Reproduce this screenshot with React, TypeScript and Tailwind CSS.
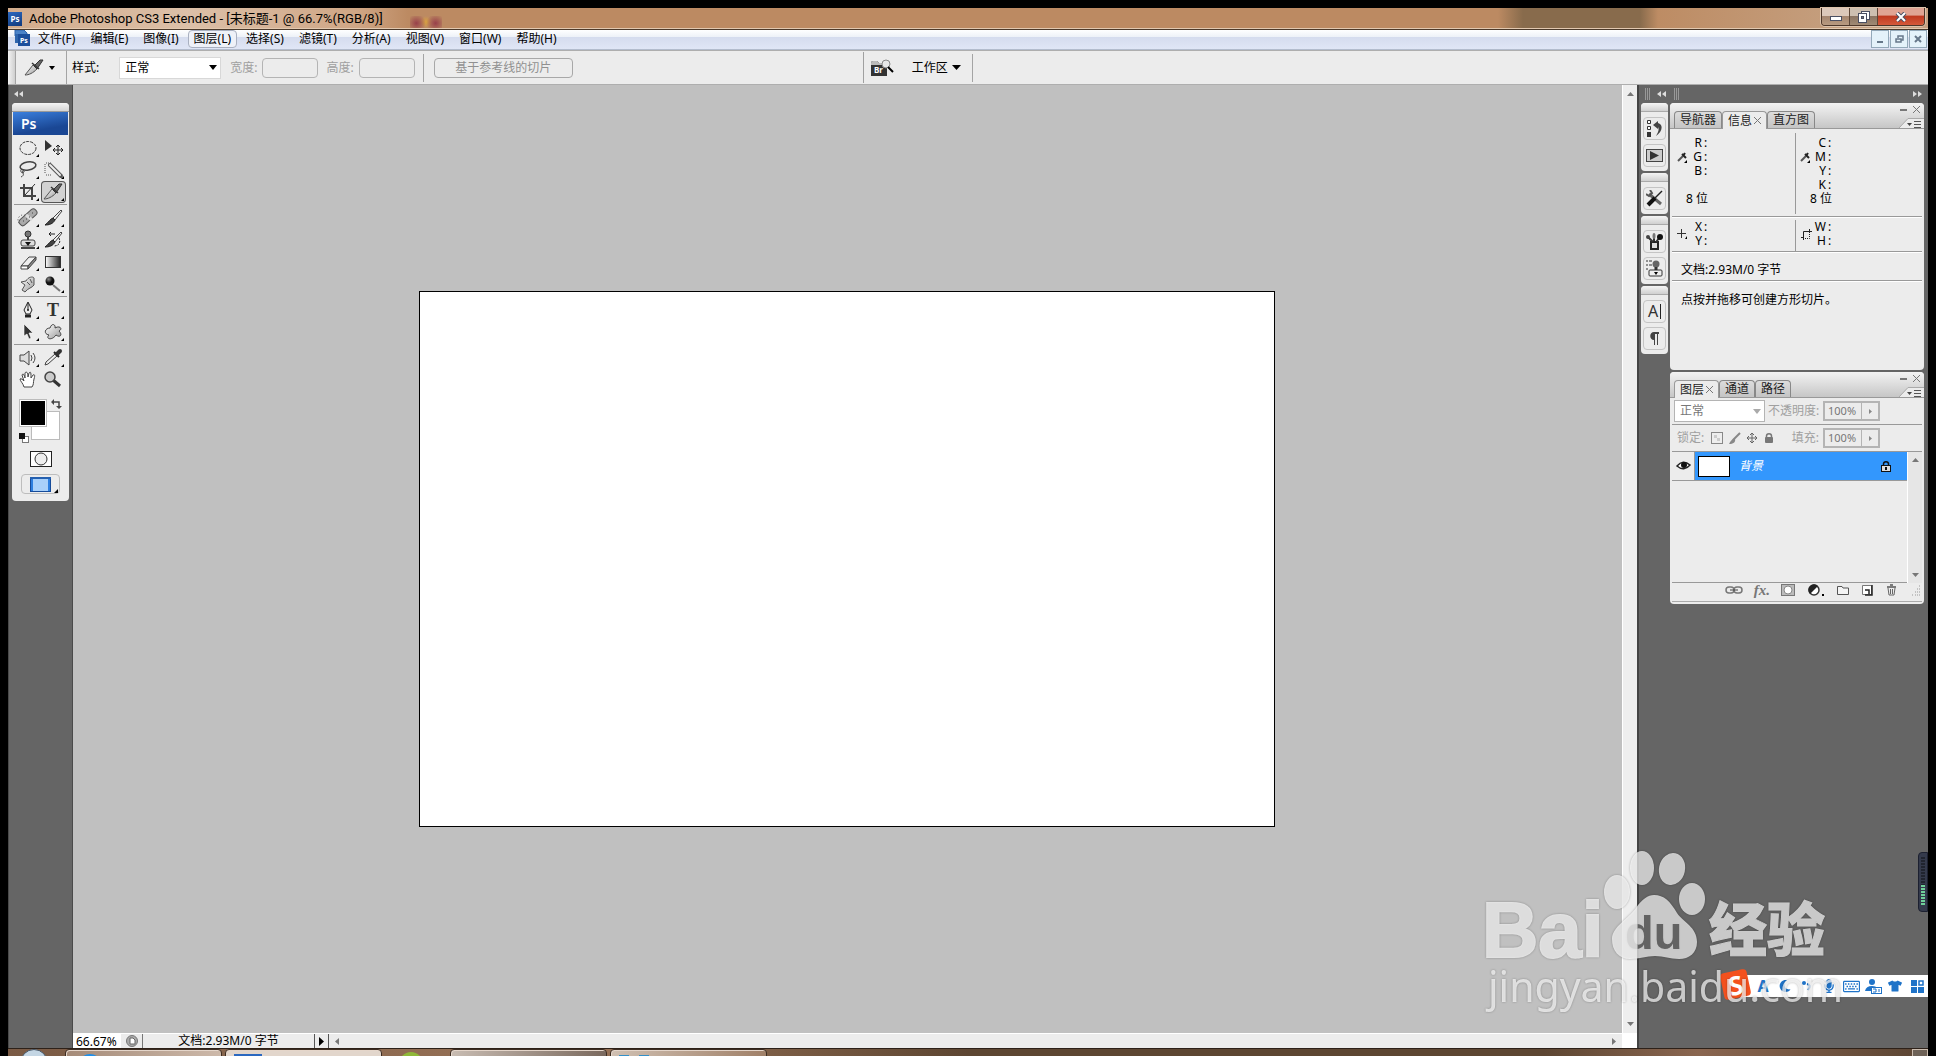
import type { ReactNode } from "react";
import { FaMicrophone, FaMoon, FaTshirt, FaRegKeyboard } from "react-icons/fa";

const menus = ["文件(F)", "编辑(E)", "图像(I)", "图层(L)", "选择(S)", "滤镜(T)", "分析(A)", "视图(V)", "窗口(W)", "帮助(H)"];

/* ---------- toolbox drawings, all on a 25x22 cell ---------- */

const slice = (
  <>
    <path d="M3 18 L11 8 L15 12 C11 16 7 18 3 18Z" fill="url(#metal)" stroke="#555" />
    <path d="M12 9 L18 3 H21 L15 12Z" fill="#666" stroke="#333" />
    <path d="M10 6 L17 12" stroke="#333" strokeWidth="1.5" />
  </>
);

const brush = (
  <>
    <path d="M20 3 L12 11 L14 13 L21 4Z" fill="#eee" stroke="#444" />
    <path d="M12 11 L14 13 C12 17 8 18 4 18 C8 15 9 12 12 11Z" fill="#444" stroke="#222" />
  </>
);

const stamp = (
  <>
    <circle cx="12" cy="5" r="3" fill="#777" stroke="#333" />
    <path d="M12 8 V12" stroke="#444" strokeWidth="2" />
    <rect x="5" y="11" width="14" height="6" rx="2" fill="#ddd" stroke="#444" />
    <path d="M5 19 H19" stroke="#444" strokeWidth="2" />
    <path d="M9 13 H15 L12 17Z" fill="#111" />
  </>
);

const toolGroups: { name: string; art: ReactNode; flat?: boolean }[][] = [
  [
    { name: "椭圆选框", art: <ellipse cx="12" cy="11" rx="8" ry="6.5" fill="none" stroke="#333" strokeDasharray="3 1" /> },
    {
      name: "移动", flat: true,
      art: (
        <>
          <path d="M4 3 V14 L11 9Z" fill="#333" />
          <path d="M17 8 V18 M12 13 H22 M15 10 L17 8 L19 10 M15 16 L17 18 L19 16 M14 11 L12 13 L14 15 M20 11 L22 13 L20 15" fill="none" stroke="#222" />
        </>
      ),
    },
    {
      name: "套索",
      art: (
        <>
          <ellipse cx="12" cy="7" rx="8" ry="4" fill="none" stroke="#444" strokeWidth="1.5" transform="rotate(-10 12 7)" />
          <path d="M6 10 C3 12 6 15 8 13 C9 11 5 11 7 14 C8 16 7 17 5 18" fill="none" stroke="#444" />
        </>
      ),
    },
    {
      name: "快速选择",
      art: (
        <>
          <path d="M5 4 H10 M4 5 V15 M5 16 H10" fill="none" stroke="#555" strokeDasharray="1 1" />
          <path d="M9 6 L20 17" stroke="#555" strokeWidth="4" strokeLinecap="round" />
          <path d="M9 6 L19 16" stroke="#eee" strokeWidth="2" strokeLinecap="round" />
        </>
      ),
    },
    {
      name: "裁剪",
      art: (
        <>
          <path d="M8 3 V15 H20 M4 7 H16 V19" fill="none" stroke="#444" strokeWidth="2" />
          <path d="M19 3 L9 14" stroke="#333" />
        </>
      ),
    },
    { name: "切片", art: slice },
  ],
  [
    {
      name: "修复画笔",
      art: (
        <>
          <ellipse cx="7" cy="13" rx="5" ry="5" fill="none" stroke="#444" strokeDasharray="1 2" />
          <rect x="2" y="7" width="21" height="7" rx="3" fill="#aaa" stroke="#555" transform="rotate(-42 12 11)" />
          <path d="M10 8 L16 13" stroke="#ddd" strokeWidth="3" />
          <path d="M7 14h1M10 12h1M13 10h1M16 6h1" stroke="#444" />
        </>
      ),
    },
    { name: "画笔", art: brush },
    { name: "仿制图章", art: stamp },
    {
      name: "历史记录画笔",
      art: (
        <>
          {brush}
          <path d="M8 5 H14 M8 5 L10 3 M8 5 L10 7" stroke="#222" fill="none" />
          <path d="M18 9 C20 13 18 17 13 17" stroke="#222" strokeDasharray="2 1" fill="none" />
        </>
      ),
    },
    {
      name: "橡皮擦",
      art: (
        <>
          <path d="M5 15 L13 6 H20 L12 15Z" fill="#eee" stroke="#444" />
          <path d="M5 15 H12 V18 H5Z" fill="#fff" stroke="#444" />
          <path d="M12 18 L20 9 V6 L12 15Z" fill="#888" stroke="#444" />
        </>
      ),
    },
    { name: "渐变", art: <rect x="4.5" y="5.5" width="15" height="11" fill="url(#fade)" stroke="#333" /> },
    {
      name: "涂抹",
      art: (
        <path d="M6 17 L9 12 L5 9 L10 8 C12 4 17 3 18 5 V12 C16 15 12 15 9 19Z M11 9 L14 12 M14 6 L16 10" fill="url(#metal)" stroke="#555" />
      ),
    },
    {
      name: "加深",
      art: (
        <>
          <path d="M12 12 L19 18" stroke="#777" strokeWidth="2" />
          <circle cx="9" cy="8" r="4.5" fill="url(#ball)" />
        </>
      ),
    },
  ],
  [
    {
      name: "钢笔",
      art: (
        <>
          <path d="M12 3 L16 11 L14 15 H10 L8 11Z" fill="#eee" stroke="#222" />
          <path d="M12 4 V11" stroke="#222" />
          <circle cx="12" cy="11" r="1" fill="#222" />
          <path d="M9 17 H15" stroke="#222" strokeWidth="3" />
        </>
      ),
    },
    { name: "文字", art: <text x="12" y="17" textAnchor="middle" className="font-['Liberation_Serif',serif] text-[18px] font-bold" fill="#333">T</text> },
    { name: "路径选择", art: <path d="M8 3 V15 L11 13 L13 18 L15 17 L13 12 H17Z" fill="#333" stroke="#fff" strokeWidth=".6" /> },
    {
      name: "自定形状",
      art: <path d="M9 7 C11 1 15 4 14 7 C19 4 22 8 18 10 C22 14 19 17 15 14 C11 20 4 18 8 14 C2 13 4 7 9 7Z" fill="url(#metal)" stroke="#444" />,
    },
  ],
  [
    {
      name: "注释",
      art: (
        <>
          <path d="M4 8 H8 L13 4 V18 L8 14 H4Z" fill="#ddd" stroke="#444" />
          <path d="M15 8 Q17 11 15 14 M17 6 Q21 11 17 16" fill="none" stroke="#444" />
        </>
      ),
    },
    {
      name: "吸管",
      art: (
        <>
          <path d="M4 18 L5 15 L14 7 L16 9 L7 17Z" fill="#eee" stroke="#444" />
          <path d="M13 5 L18 10" stroke="#222" strokeWidth="2" />
          <path d="M16 7 L19 4" stroke="#333" strokeWidth="4" strokeLinecap="round" />
        </>
      ),
    },
    {
      name: "抓手", flat: true,
      art: (
        <path
          d="M8 18 C7 14 4 12 4 10 C5 9 7 11 8 12 L6 6 C7 4 8 5 9 9 L9 4 C10 2 12 3 12 8 L13 4 C15 2 15 4 15 9 L17 6 C19 5 19 7 18 10 C17 14 18 15 16 18Z"
          fill="#fff" stroke="#444"
        />
      ),
    },
    {
      name: "缩放", flat: true,
      art: (
        <>
          <path d="M12 11 L19 17" stroke="#333" strokeWidth="3" />
          <circle cx="9" cy="8" r="5" fill="#ccc" stroke="#444" strokeWidth="1.5" />
        </>
      ),
    },
  ],
];

function Defs() {
  return (
    <svg className="absolute size-0" aria-hidden="true">
      <defs>
        <linearGradient id="metal" x1="0" y1="0" x2="1" y2="1">
          <stop offset="0" stopColor="#fff" />
          <stop offset="1" stopColor="#999" />
        </linearGradient>
        <linearGradient id="fade">
          <stop offset="0" stopColor="#fff" />
          <stop offset="1" stopColor="#222" />
        </linearGradient>
        <radialGradient id="ball" cx=".35" cy=".3" r=".8">
          <stop offset="0" stopColor="#888" />
          <stop offset=".5" stopColor="#111" />
        </radialGradient>
      </defs>
    </svg>
  );
}

function Icon({ w, h, children }: { w: number; h: number; children: ReactNode }) {
  return (
    <svg width={w} height={h} viewBox={`0 0 ${w} ${h}`} className="block shrink-0" fill="none">
      {children}
    </svg>
  );
}

function TitleBar() {
  return (
    <header className="relative flex h-[22px] items-center border-b border-[#4b3a2b] bg-[linear-gradient(90deg,#d2ab8b_0,#dcc0a8_180px,#cfa685_350px,#bc8a62_400px,#bc8a62_1490px,#886b4c_1515px,#886b4c_1632px,#bd8c64_1650px,#bd8c64_84%,#c6a283_97%)] pr-[3px] shadow-[inset_0_-1px_0_#e3c9b0]">
      <div className="absolute left-[402px] top-2 h-3 w-8 bg-[radial-gradient(circle_at_20%_60%,#98404a_0,transparent_35%),radial-gradient(circle_at_80%_60%,#98404a_0,transparent_35%),radial-gradient(circle_at_50%_50%,#d8a040_0,transparent_35%)]" />
      <span className="flex h-[14px] w-[14px] items-center justify-center bg-[linear-gradient(160deg,#2b68c0,#123a7c)] text-[8px] font-bold text-white">Ps</span>
      <h1 className="pl-[7px] font-['Roboto','Noto_Sans_CJK_SC',sans-serif] text-[13px] text-black">Adobe Photoshop CS3 Extended - [未标题-1 @ 66.7%(RGB/8)]</h1>
      <div className="ml-auto flex h-[18px] self-start overflow-hidden rounded-b border border-t-0 border-[#4d372a] shadow-[0_0_0_1px_#dcc3ac]">
        <button aria-label="最小化" className="flex w-7 items-center justify-center border-r border-[#5d4738] bg-[linear-gradient(#dcc8ba_45%,#a58670_50%,#b89a80)]">
          <Icon w={12} h={10}><rect x=".5" y="4.5" width="11" height="4" fill="#fff" stroke="#4a4f62" /></Icon>
        </button>
        <button aria-label="还原" className="flex w-7 items-center justify-center border-r border-[#5d4738] bg-[linear-gradient(#cdbfb0_45%,#8a7462_50%,#a08a74)]">
          <Icon w={12} h={12}>
            <rect x="3.5" y=".5" width="8" height="8" fill="#fff" stroke="#4a4f62" />
            <rect x=".5" y="2.5" width="8" height="9" fill="#fff" stroke="#4a4f62" />
            <rect x="3.5" y="5.5" width="2" height="2" fill="#777" stroke="#4a4f62" />
          </Icon>
        </button>
        <button aria-label="关闭" className="flex w-[46px] items-center justify-center bg-[linear-gradient(#e0a493_40%,#c03a20_50%,#d5593a)]">
          <Icon w={12} h={10}>
            <path d="M2 1 L10 9 M10 1 L2 9" stroke="#4a4f62" strokeWidth="4" />
            <path d="M2 1 L10 9 M10 1 L2 9" stroke="#fff" strokeWidth="2" />
          </Icon>
        </button>
      </div>
    </header>
  );
}

function MenuBar() {
  const mdi = "flex size-[18px] items-center justify-center border border-[#93a9b9] bg-[#e4f2fa]";
  return (
    <nav className="flex h-5 items-start border-b border-[#b3bccd] bg-[linear-gradient(#fff_0,#eef2f8_35%,#d5dcee_38%,#e0e6f6_100%)] pl-1.5 pr-px">
      <Icon w={17} h={16}>
        <path d="M1 0 H10 L13 3 V6 H1Z" fill="#4b83c8" stroke="#2f65ac" />
        <rect x="4" y="4" width="12" height="12" fill="#1c4f9c" />
        <rect x="1" y="4" width="3" height="9" fill="#2f65ac" />
        <text x="6" y="13" className="text-[7px] font-bold" fill="#fff">Ps</text>
      </Icon>
      <ul className="flex items-center gap-px">
        {menus.map((m) => (
          <li key={m}>
            <button
              className={
                m === "图层(L)"
                  ? "mx-px block h-[18px] rounded-sm border border-[#a9b0c0] bg-[#eef1f8] px-[5px] text-[12px] leading-4"
                  : "block h-[18px] px-[7px] text-[12px] leading-[18px]"
              }
            >
              {m}
            </button>
          </li>
        ))}
      </ul>
      <div className="ml-auto flex gap-px">
        <button aria-label="最小化文档" className={mdi}><Icon w={8} h={8}><path d="M1 7 H7" stroke="#66788a" strokeWidth="2" /></Icon></button>
        <button aria-label="还原文档" className={mdi}>
          <Icon w={9} h={8}><path d="M3 3 V1 H8 V5 H6 M1 4 H6 V7 H1Z" stroke="#66788a" strokeWidth="1.5" /></Icon>
        </button>
        <button aria-label="关闭文档" className={mdi}><Icon w={8} h={8}><path d="M1 1 L7 7 M7 1 L1 7" stroke="#66788a" strokeWidth="2" /></Icon></button>
      </div>
    </nav>
  );
}

function OptionsBar() {
  const field = "ml-[5px] h-5 w-14 rounded-sm border border-[#b4b4b4] bg-[#ececec]";
  return (
    <section className="flex h-[35px] items-center border-y border-[#aeaeae] bg-[#ececec] text-[12px]">
      <div className="h-full w-2 border-r border-[#a4a4a4] bg-[linear-gradient(90deg,#f4f4f4,#cfcfcf)]" />
      <button aria-label="切片工具" className="flex items-center gap-0.5 pl-[6px]">
        <Icon w={25} h={22}>{slice}</Icon>
        <Icon w={6} h={4}><path d="M0 0 H6 L3 4Z" fill="#000" /></Icon>
      </button>
      <div className="ml-[11px] h-full border-l border-[#a4a4a4]" />
      <label htmlFor="style" className="pl-[5px]">样式:</label>
      <div className="relative ml-5 w-[102px]">
        <select id="style" className="h-[22px] w-full appearance-none border border-[#d8d8d8] bg-white pl-[5px]"><option>正常</option></select>
        <div className="pointer-events-none absolute right-1 top-2"><Icon w={8} h={5}><path d="M0 0 H8 L4 5Z" fill="#000" /></Icon></div>
      </div>
      <label htmlFor="w" className="pl-[9px] text-[#a0a0a0]">宽度:</label>
      <input id="w" disabled className={field} />
      <label htmlFor="h" className="pl-2 text-[#a0a0a0]">高度:</label>
      <input id="h" disabled className={field} />
      <div className="ml-2 h-7 border-l border-[#a4a4a4]" />
      <button className="ml-[10px] h-5 w-[139px] rounded-sm border border-[#a8a8a8] leading-4 text-[#909090]">基于参考线的切片</button>
      <div className="ml-[290px] h-[31px] border-l border-[#a0a0a0]" />
      <button aria-label="转到 Bridge" className="ml-[7px]">
        <Icon w={23} h={18}>
          <path d="M0 4 Q0 2 2 2 H6 L8 4 H16 V17 H0Z" fill="#333" />
          <path d="M0 6 V4 Q0 2 2 2 H6 L8 4 H16 V6Z" fill="#bbb" />
          <text x="3" y="14" className="text-[8px] font-bold" fill="#fff">Br</text>
          <circle cx="15" cy="5" r="4" fill="#e8e8e8" stroke="#888" />
          <path d="M17 8 L22 13" stroke="#000" strokeWidth="2" />
        </Icon>
      </button>
      <button className="flex items-center gap-1 pl-[18px]">
        工作区
        <Icon w={9} h={5}><path d="M0 0 H9 L4.5 5Z" fill="#000" /></Icon>
      </button>
      <div className="ml-[11px] h-7 border-l border-[#a4a4a4]" />
    </section>
  );
}

function Toolbox() {
  return (
    <aside className="flex w-[65px] flex-col border border-y-0 border-[#4a4a4a] bg-[#656565] px-[3px]">
      <button aria-label="折叠工具箱" className="flex h-[18px] items-center pl-0.5">
        <Icon w={10} h={6}><path d="M4 0 V6 L0 3Z M9 0 V6 L5 3Z" fill="#ddd" /></Icon>
      </button>
      <div className="flex flex-col items-stretch rounded-sm bg-[#ececec] pb-[7px]">
        <div className="h-[9px] rounded-t-sm border-b border-[#999] bg-[linear-gradient(#f4f4f4,#d4d4d4)]" />
        <div className="mx-px mb-0.5 h-[23px] bg-[linear-gradient(170deg,#3b80de,#1a4794_70%)] pl-2 text-[14px] font-semibold leading-[23px] text-white">Ps</div>
        {toolGroups.map((group, i) => (
          <div key={i} className={i < 3 ? "mx-0.5 mb-0.5 border-b border-[#999] pb-px pl-0.5" : "mx-0.5 pl-0.5"}>
            <div className="grid grid-cols-[25px_25px]">
              {group.map((t) => (
                <button
                  key={t.name}
                  aria-label={t.name}
                  className={t.name === "切片" ? "h-[22px] rounded bg-[#d2d2d2] shadow-[inset_0_0_0_1px_#555]" : "h-[22px]"}
                >
                  <Icon w={25} h={22}>
                    {t.art}
                    {!t.flat && <path d="M23 17 V20 H20Z" fill="#000" />}
                  </Icon>
                </button>
              ))}
            </div>
          </div>
        ))}
        <div className="relative mx-auto mt-2 h-[44px] w-[44px]">
          <button aria-label="背景色" className="absolute left-3 top-3 size-[29px] border border-[#bbb] bg-white" />
          <button aria-label="前景色" className="absolute left-0 top-0 size-7 border border-[#bbb] bg-black shadow-[inset_0_0_0_1px_#fff]" />
          <button aria-label="切换颜色" className="absolute right-0 top-0">
            <Icon w={12} h={10}>
              <path d="M2 3 H8 V7" stroke="#444" strokeWidth="1.5" />
              <path d="M3 0 V6 L0 3Z M5 7 H11 L8 10Z" fill="#444" />
            </Icon>
          </button>
          <button aria-label="默认颜色" className="absolute bottom-0 left-0">
            <Icon w={10} h={10}><rect x="3.5" y="3.5" width="6" height="6" fill="#fff" stroke="#777" /><rect width="6" height="6" fill="#111" /></Icon>
          </button>
        </div>
        <button aria-label="快速蒙版" className="mx-auto mt-2">
          <Icon w={22} h={16}><rect x=".5" y=".5" width="21" height="15" fill="#fff" stroke="#222" /><circle cx="11" cy="8" r="6" fill="#eee" stroke="#333" /></Icon>
        </button>
        <button aria-label="屏幕模式" className="mx-auto mt-[7px] flex h-5 w-[39px] items-center justify-center rounded border border-[#bdbdbd]">
          <Icon w={37} h={18}>
            <rect x="8.5" y="2.5" width="20" height="14" fill="#a8d0fa" stroke="#164b9a" />
            <path d="M10 3 V16 M27 3 V16" stroke="#2d7fe0" strokeWidth="2" />
            <path d="M8 3 H29" stroke="#2560b0" strokeWidth="2" />
            <path d="M36 14 V18 H32Z" fill="#000" />
          </Icon>
        </button>
      </div>
    </aside>
  );
}

function Workspace() {
  return (
    <main className="flex min-w-0 flex-1 flex-col">
      <div className="flex min-h-0 flex-1">
        <div className="flex flex-1 items-center justify-center bg-[#c0c0c0] pr-0.5">
          <div className="h-[536px] w-[856px] border border-black bg-white" />
        </div>
        <div className="flex w-[15px] flex-col items-center justify-between border-l border-white bg-[#eee] py-[7px]">
          <Icon w={7} h={4}><path d="M0 4 H7 L3.5 0Z" fill="#777" /></Icon>
          <Icon w={7} h={4}><path d="M0 0 H7 L3.5 4Z" fill="#777" /></Icon>
        </div>
      </div>
      <footer className="flex h-[15px] items-center border-t border-white bg-[#ececec] text-[12px] leading-[14px]">
        <input aria-label="缩放比例" defaultValue="66.67%" className="h-full w-12 bg-white pl-[3px] text-[12px]" />
        <div className="flex h-full w-[22px] items-center justify-center border-r border-[#777]">
          <Icon w={12} h={12}>
            <circle cx="6" cy="6" r="5.5" fill="#aaa" stroke="#777" />
            <path d="M4 3 H7 L9 5 V9 H4Z" fill="#fff" stroke="#666" />
          </Icon>
        </div>
        <div className="w-[171px] text-center">文档:2.93M/0 字节</div>
        <button aria-label="状态菜单" className="flex h-full w-[15px] items-center justify-center border-x border-[#555]">
          <Icon w={5} h={9}><path d="M0 0 V9 L5 4.5Z" fill="#000" /></Icon>
        </button>
        <div className="flex flex-1 items-center justify-between px-1.5">
          <Icon w={4} h={7}><path d="M4 0 V7 L0 3.5Z" fill="#777" /></Icon>
          <Icon w={4} h={7}><path d="M0 0 V7 L4 3.5Z" fill="#777" /></Icon>
        </div>
        <div className="h-full w-[15px] bg-white" />
      </footer>
    </main>
  );
}

const dockGroups: { name: string; art: ReactNode }[][] = [
  [
    {
      name: "历史记录",
      art: (
        <>
          <path d="M1.5 .5 h3 v3 h-3z M1.5 6.5 h3 v3 h-3z" fill="#fff" stroke="#333" />
          <rect x="1" y="12" width="4" height="5" fill="#333" />
          <path d="M7 5 L12 1 V3 C18 5 16 12 10 16 C13 11 13 9 12 7 V9Z" fill="#444" />
        </>
      ),
    },
    { name: "动作", art: <><rect x=".5" y="2.5" width="16" height="12" fill="#ccc" stroke="#444" /><path d="M4 4 V13 L13 8.5Z" fill="#333" /></> },
  ],
  [
    {
      name: "工具预设",
      art: (
        <>
          <path d="M3 4 L15 14" stroke="#666" strokeWidth="3" />
          <path d="M0 4 L3 6 L6 3 L4 0" fill="none" stroke="#555" strokeWidth="2" />
          <path d="M16 1 L9 8" stroke="#222" strokeWidth="1.5" />
          <path d="M9 8 L2 15" stroke="#111" strokeWidth="4" />
        </>
      ),
    },
  ],
  [
    {
      name: "画笔",
      art: (
        <>
          <path d="M5 9 H12 V16 H5Z" fill="#ddd" stroke="#222" strokeWidth="2" />
          <path d="M2 4 L7 9 M8 2 V8 M14 4 L10 9" stroke="#333" strokeWidth="2" />
          <circle cx="2" cy="4" r="2" fill="#444" />
          <ellipse cx="8" cy="3" rx="1.5" ry="3" fill="#777" />
          <circle cx="14" cy="4" r="3" fill="#111" />
        </>
      ),
    },
    {
      name: "仿制源",
      art: (
        <>
          <path d="M0 1 h2 M0 5 h2 M0 9 h2 M3 1 h3 M3 5 h3" stroke="#333" />
          <circle cx="10" cy="4" r="3.5" fill="#666" />
          <path d="M10 7 V10" stroke="#333" strokeWidth="3" />
          <rect x="3" y="10" width="13" height="6" rx="1" fill="#eee" stroke="#333" />
          <path d="M8 12 H12 L10 15Z" fill="#000" />
        </>
      ),
    },
  ],
  [
    { name: "字符", art: <><text x="2" y="14" className="text-[16px]" fill="#333">A</text><path d="M14.5 1 V16" stroke="#222" /></> },
    { name: "段落", art: <path d="M8 2 H13 V4 H12 V15 H11 V4 H9 V15 H8 V10 C3 10 3 2 8 2Z" fill="#444" /> },
  ],
];

function Tabs({ names, active }: { names: string[]; active: string }) {
  return (
    <div className="flex h-[26px] items-end rounded-t-sm border-b border-[#999] bg-[linear-gradient(#f3f3f3,#c6c6c6)] pl-1">
      {names.map((n) => (
        <button
          key={n}
          className={
            n === active
              ? "-mb-px flex h-[18px] items-center gap-0.5 rounded-t border border-b-0 border-[#999] bg-[#ececec] px-[5px] text-[12px] text-[#222]"
              : "flex h-[17px] items-center rounded-t border border-b-0 border-[#888] bg-[linear-gradient(#dcdcdc,#c4c4c4)] px-[5px] text-[12px] text-[#222]"
          }
        >
          {n}
          {n === active && <Icon w={7} h={7}><path d="M0 0 L7 7 M7 0 L0 7" stroke="#777" /></Icon>}
        </button>
      ))}
      <div className="ml-auto flex h-full flex-col items-end justify-between">
        <div className="flex items-center gap-1.5 pr-1 pt-[3px]">
          <Icon w={7} h={7}><path d="M0 4 H7" stroke="#777" strokeWidth="2" /></Icon>
          <Icon w={7} h={7}><path d="M0 0 L7 7 M7 0 L0 7" stroke="#777" /></Icon>
        </div>
        <Icon w={25} h={10}>
          <path d="M0 10 L9 1 H25 V10Z" fill="#ececec" />
          <path d="M0 10 L9 .5 H25" stroke="#aaa" />
          <path d="M8 5 H13 L10.5 8Z" fill="#444" />
          <path d="M15 3.5 H22 M15 6.5 H22 M15 9.5 H22" stroke="#555" />
        </Icon>
      </div>
    </div>
  );
}

function Readout({ rows, art }: { rows: string[]; art: ReactNode }) {
  return (
    <div className="flex flex-1 items-center pl-[5px]">
      <div className="w-3">{art}</div>
      <div>
        {rows.map((r) => (
          <div key={r} className="flex h-[14px] items-center text-[12px] leading-[14px]">
            <span className="w-[13px] text-right">{r}</span>
            <span className="pl-0.5">:</span>
          </div>
        ))}
      </div>
    </div>
  );
}

const dropper = (
  <Icon w={11} h={11}>
    <path d="M1 9 L6 4" stroke="#555" strokeWidth="2" />
    <path d="M5 2 L9 6 M6 4 L8 1" stroke="#222" strokeWidth="2" />
    <path d="M10 8 V11 H7Z" fill="#000" />
  </Icon>
);

function InfoPanel() {
  const rule = "mx-0.5 border-b border-[#999] shadow-[0_1px_0_#fff]";
  return (
    <section className="flex h-[267px] flex-col rounded-sm bg-[#ececec] text-[12px]">
      <Tabs names={["导航器", "信息", "直方图"]} active="信息" />
      <div className={`${rule} flex pb-0.5 pt-1`}>
        <div className="w-[123px] pb-2 pt-[3px]">
          <Readout rows={["R", "G", "B"]} art={dropper} />
          <div className="mt-[14px] h-[14px] pl-[14px] leading-[14px]">8 位</div>
        </div>
        <div className="flex-1 border-l border-[#999] pb-2 pt-[3px]">
          <div className="relative">
            <div className="absolute left-1 top-4">{dropper}</div>
            <Readout rows={["C", "M", "Y", "K"]} art={null} />
          </div>
          <div className="h-[14px] pl-[14px] leading-[14px]">8 位</div>
        </div>
      </div>
      <div className={`${rule} flex pt-[3px]`}>
        <div className="w-[123px] pb-[3px]"><Readout rows={["X", "Y"]} art={<Icon w={11} h={11}><path d="M4.5 0 V9 M0 4.5 H9" stroke="#333" /><path d="M10 7 V10 H8Z" fill="#000" /></Icon>} /></div>
        <div className="flex-1 border-l border-[#999] pb-[3px]">
          <Readout rows={["W", "H"]} art={<Icon w={11} h={11}><path d="M2.5 11 V2.5 H11 M0 8.5 H3 M8.5 0 V3" stroke="#222" /><path d="M8.5 3 V9.5 H3" stroke="#222" strokeDasharray="1 1" /></Icon>} />
        </div>
      </div>
      <p className={`${rule} h-[29px] pl-[9px] pt-[9px] leading-[18px]`}>文档:2.93M/0 字节</p>
      <p className="pl-[11px] pt-[10px] leading-[18px]">点按并拖移可创建方形切片。</p>
    </section>
  );
}

function Percent({ id }: { id: string }) {
  return (
    <div className="flex h-5 w-[57px] border-2 border-[#b4b4b4]">
      <input id={id} defaultValue="100%" className="w-[37px] border-r border-[#b4b4b4] pl-[3px] text-[11px] text-[#777]" />
      <button aria-label="滑块" className="flex flex-1 items-center justify-center"><Icon w={3} h={5}><path d="M0 0 V5 L3 2.5Z" fill="#888" /></Icon></button>
    </div>
  );
}

function LayersPanel() {
  return (
    <section className="flex h-[232px] flex-col rounded-sm bg-[#ececec] text-[12px]">
      <Tabs names={["图层", "通道", "路径"]} active="图层" />
      <div className="mx-0.5 flex h-[27px] items-center border-b border-[#999] pl-0.5">
        <div className="relative w-[91px]">
          <select aria-label="混合模式" className="h-[22px] w-full appearance-none border border-[#b4b4b4] bg-white pl-[5px] text-[#777]"><option>正常</option></select>
          <div className="pointer-events-none absolute right-1 top-[9px]"><Icon w={8} h={5}><path d="M0 0 H8 L4 5Z" fill="#aaa" /></Icon></div>
        </div>
        <label htmlFor="opacity" className="w-[58px] whitespace-nowrap pl-[3px] text-[#a0a0a0]">不透明度:</label>
        <Percent id="opacity" />
      </div>
      <div className="mx-0.5 flex h-[27px] items-center border-b border-[#999] pl-[5px] text-[#a0a0a0]">
        <span>锁定:</span>
        <div className="ml-[7px] flex items-center gap-[5px]">
          <Icon w={12} h={12}><rect x=".5" y=".5" width="11" height="11" fill="#eee" stroke="#888" /><path d="M3 3h3v3H3z M6 6h3v3H6z" fill="#ccc" /></Icon>
          <Icon w={13} h={13}><path d="M12 1 L5 8" stroke="#888" strokeWidth="2" /><path d="M1 12 C3 8 5 6 7 7 C8 10 5 12 1 12Z" fill="#888" /></Icon>
          <Icon w={12} h={12}><path d="M6 1 V11 M1 6 H11 M4 3 L6 1 L8 3 M4 9 L6 11 L8 9 M3 4 L1 6 L3 8 M9 4 L11 6 L9 8" stroke="#666" /></Icon>
          <Icon w={12} h={12}><path d="M3.500 6 V4 C3.500 1 8.500 1 8.500 4 V6" stroke="#777" strokeWidth="1.5" /><rect x="2" y="5" width="8" height="6" rx="1" fill="#777" /></Icon>
        </div>
        <label htmlFor="fill" className="ml-auto pr-1">填充:</label>
        <Percent id="fill" />
        <div className="w-[42px]" />
      </div>
      <div className="mx-0.5 flex flex-1">
        <div className="flex-1 border-b border-[#999]">
          <div className="flex h-[29px] border-b border-[#999]">
            <button aria-label="可见性" className="flex w-[23px] items-center justify-center border-r border-[#999] pb-0.5">
              <Icon w={15} h={11}>
                <path d="M1 6 Q7 -1 14 5 Q8 12 1 6Z" fill="#fff" stroke="#222" strokeWidth="1.5" />
                <circle cx="8" cy="5" r="3" fill="#111" />
              </Icon>
            </button>
            <div className="flex flex-1 items-center bg-[#3397fd] pl-[3px] pr-4">
              <div className="h-[21px] w-8 border border-black bg-white" />
              <span className="pl-[9px] italic text-white">背景</span>
              <div className="ml-auto">
                <Icon w={10} h={11}><path d="M2.5 5 V3 C2.5 0 7.5 0 7.5 3 V5" stroke="#111" strokeWidth="1.5" /><rect x=".5" y="4.5" width="9" height="6" fill="#ddd" stroke="#111" /><path d="M5 6 V9" stroke="#111" strokeWidth="2" /></Icon>
              </div>
            </div>
          </div>
        </div>
        <div className="flex w-[15px] flex-col items-center justify-between border-l border-white bg-[#e6e6e6] py-[6px]">
          <Icon w={7} h={4}><path d="M0 4 H7 L3.5 0Z" fill="#777" /></Icon>
          <Icon w={7} h={4}><path d="M0 0 H7 L3.5 4Z" fill="#777" /></Icon>
        </div>
      </div>
      <div className="mx-0.5 flex h-[19px] items-center justify-end gap-[13px] border-b border-[#aaa] pb-1 pr-px">
        <Icon w={18} h={8}><rect x="1" y="1" width="8" height="6" rx="3" stroke="#777" strokeWidth="1.5" /><rect x="9" y="1" width="8" height="6" rx="3" stroke="#777" strokeWidth="1.5" /><path d="M5 4 H13" stroke="#444" /></Icon>
        <span className="-mx-0.5 font-['Liberation_Serif',serif] text-[15px] font-bold italic leading-4 text-[#777]">fx.</span>
        <Icon w={14} h={12}><rect x=".5" y=".5" width="13" height="11" fill="#bbb" stroke="#777" /><circle cx="7" cy="6" r="4" fill="#fff" stroke="#888" /></Icon>
        <Icon w={16} h={12}><circle cx="6" cy="6" r="5" fill="#fff" stroke="#333" strokeWidth="1.5" /><path d="M2 10 A5.5 5.5 0 0 1 10 2Z" fill="#222" /><rect x="14" y="10" width="2" height="2" fill="#000" /></Icon>
        <Icon w={12} h={10}><path d="M.5 9.5 V1.5 H5 L6 3 H11.5 V9.5Z" fill="#f4f4f4" stroke="#555" /></Icon>
        <Icon w={11} h={11}><path d="M.5 .5 H9.5 V9.5 H.5Z" fill="#fff" stroke="#777" /><path d="M10 0 V10 H3 M3 5 H7 V9" stroke="#222" strokeWidth="1.5" /></Icon>
        <Icon w={11} h={12}><path d="M1 3 H10 M4 1 H7" stroke="#555" strokeWidth="1.5" /><path d="M2 4 L3 11 H8 L9 4 M4.5 5 V10 M6.5 5 V10" stroke="#666" /></Icon>
        <Icon w={11} h={11}><path d="M9 1h1M7 4h1M9 4h1M5 7h1M7 7h1M9 7h1M2 10h1M5 10h1M7 10h1M9 10h1" stroke="#999" /></Icon>
      </div>
      <div className="h-0.5" />
    </section>
  );
}

function Dock() {
  const grip = <Icon w={6} h={12}><path d="M.5 0 V12 M2.5 0 V12 M4.5 0 V12" stroke="#999" /></Icon>;
  return (
    <aside className="flex w-[291px] flex-col border-l-2 border-[#444] bg-[#656565] pl-0.5 pr-1">
      <div className="flex h-[18px] items-center pl-1">
        {grip}
        <div className="pl-[6px] pr-[7px]"><Icon w={10} h={6}><path d="M4 0 V6 L0 3Z M9 0 V6 L5 3Z" fill="#ddd" /></Icon></div>
        {grip}
        <div className="ml-auto pr-px"><Icon w={10} h={6}><path d="M0 0 V6 L4 3Z M5 0 V6 L9 3Z" fill="#ddd" /></Icon></div>
      </div>
      <div className="flex gap-0.5">
        <div className="flex w-[27px] flex-col gap-0.5">
          {dockGroups.map((g, i) => (
            <div key={i} className="rounded-sm bg-[#ececec] pb-1">
              <div className="h-[9px] rounded-t-sm border-b border-[#aaa] bg-[linear-gradient(#f4f4f4,#d0d0d0)]" />
              <div className="flex flex-col items-center gap-1 pt-[5px]">
                {g.map((b) => (
                  <button key={b.name} aria-label={b.name} className="flex size-[23px] items-center justify-center rounded-sm border border-[#c4c4c4]">
                    <Icon w={17} h={17}>{b.art}</Icon>
                  </button>
                ))}
              </div>
            </div>
          ))}
        </div>
        <div className="flex flex-1 flex-col gap-0.5">
          <InfoPanel />
          <LayersPanel />
        </div>
      </div>
    </aside>
  );
}

function Taskbar() {
  const item = "h-4 w-[157px] shrink-0 rounded-t-sm border border-[#3d2d22] shadow-[inset_1px_1px_0_#e5d6ca]";
  return (
    <div className="flex h-2 gap-[3px] overflow-hidden border-t border-[#2d2119] bg-[linear-gradient(90deg,#7a5a44,#9a7458_30%,#5d4632_50%,#5d4632_80%,#8a6650_88%,#5a4432)]">
      <div className="ml-3 mr-[14px] h-8 w-7 shrink-0 rounded-full border border-[#456] bg-[#c4d6e4]" />
      <div className={`${item} bg-[linear-gradient(90deg,#a58b78,#cdb9aa)] pl-3`}><div className="mt-1 size-6 rounded-full bg-[#2090ea]" /></div>
      <div className={`${item} bg-[#e2d6cc] pl-2`}><div className="mt-1 h-4 w-7 bg-[#2b68c0]" /></div>
      <div className="w-[62px] shrink-0 pl-[14px]"><div className="mt-[3px] size-6 rounded-full bg-[#8fb838]" /></div>
      <div className={`${item} bg-[linear-gradient(90deg,#c8bcb2,#7a695e)]`} />
      <div className={`${item} bg-[linear-gradient(90deg,#d0c0b2,#a08068)] pl-2`}><div className="mt-[5px] h-3 w-[30px] border-x-[10px] border-[#3390c8]" /></div>
      <div className="ml-auto h-4 w-4 border border-[#cbbcae] bg-[#6e6257]" />
    </div>
  );
}

function ImeBar() {
  const icons = [
    <span className="text-[16px] font-bold leading-none">A</span>,
    <FaMoon size={12} />,
    <Icon w={10} h={12}><circle cx="2" cy="3" r="2" fill="#1f73c8" /><path d="M5 4 Q10 5 6 10" stroke="#1f73c8" strokeWidth="2" /></Icon>,
    <FaMicrophone size={14} />,
    <FaRegKeyboard size={17} />,
    <Icon w={17} h={15}>
      <circle cx="7" cy="3" r="3" fill="#1f73c8" />
      <path d="M0 12 Q1 7 7 7 Q11 7 12 9 V12Z" fill="#1f73c8" />
      <rect x="6.5" y="8.5" width="10" height="6" fill="#fff" stroke="#1f73c8" />
      <path d="M8 10 H11 V13 H8 M14 10 V13" stroke="#1f73c8" />
    </Icon>,
    <FaTshirt size={14} />,
    <Icon w={13} h={13}><path d="M0 0h6v6H0z M0 7h6v6H0z M7 7h6v6H7z" fill="#1f73c8" /><rect x="8" y="1" width="4" height="4" stroke="#1f73c8" strokeWidth="1.5" /></Icon>,
  ];
  return (
    <div className="absolute bottom-[59px] right-2 flex h-[22px] w-[185px] items-center bg-white pl-[9px] text-[#1f73c8]">
      <div className="absolute -left-[21px] -top-1 flex size-[27px] -rotate-12 items-center justify-center rounded bg-[#f4511e] text-[26px] font-bold leading-none text-white">S</div>
      {icons.map((icon, i) => (
        <div key={i} className="flex w-[22px] shrink-0 justify-center">{icon}</div>
      ))}
    </div>
  );
}

function Watermark() {
  return (
    <svg className="pointer-events-none absolute bottom-9 right-24 drop-shadow-[0_0_1px_rgba(0,0,0,0.4)]" width="360" height="175" viewBox="0 0 360 175">
      <linearGradient id="du" gradientUnits="userSpaceOnUse" x1="157" x2="158" y1="0" y2="0">
        <stop offset="0" stopColor="#d4d4d4" />
        <stop offset="1" stopColor="#636363" />
      </linearGradient>
      <g fill="#fff" opacity=".7">
        <text x="2" y="112" stroke="#fff" strokeWidth="2" className="font-['Liberation_Sans',sans-serif] text-[78px] font-bold">Bai</text>
        <ellipse cx="137" cy="47" rx="13" ry="17" />
        <ellipse cx="162" cy="23" rx="12" ry="17" />
        <ellipse cx="192" cy="24" rx="13" ry="16" transform="rotate(12 192 24)" />
        <ellipse cx="212" cy="54" rx="13" ry="16" />
        <path d="M132 94 C132 82 148 74 156 63 C162 54 168 50 174 50 C184 50 190 56 197 68 C203 77 217 82 217 97 C217 108 209 114 199 114 C190 114 184 111 175 111 C166 111 160 114 150 114 C139 114 132 106 132 94Z" />
        <text x="229" y="106" stroke="#fff" strokeWidth="1" className="font-['Noto_Sans_CJK_SC',sans-serif] text-[58px] font-black">经验</text>
        <text x="8" y="157" className="font-['Noto_Sans',sans-serif] text-[41px]">jingyan.baidu.com</text>
      </g>
      <text x="145" y="104" className="font-['Liberation_Sans',sans-serif] text-[47px] font-bold" fill="url(#du)">du</text>
    </svg>
  );
}

export default function App() {
  return (
    <div className="relative flex h-screen flex-col bg-black px-2 pt-2 font-['Noto_Sans','Noto_Sans_CJK_SC',sans-serif] text-black">
      <Defs />
      <TitleBar />
      <MenuBar />
      <OptionsBar />
      <div className="flex min-h-0 flex-1">
        <Toolbox />
        <Workspace />
        <Dock />
      </div>
      <Taskbar />
      <div className="absolute right-2 top-[852px] flex h-[60px] w-[10px] flex-col justify-end rounded-l border border-[#1c2030] bg-[#343a4c] px-0.5 pb-1.5">
        <div className="h-7 bg-[repeating-linear-gradient(#20242f_0_2px,#343a4c_2px_3px)]" />
        <div className="h-5 bg-[repeating-linear-gradient(#6fcf9a_0_2px,#343a4c_2px_3px)]" />
      </div>
      <ImeBar />
      <Watermark />
    </div>
  );
}
